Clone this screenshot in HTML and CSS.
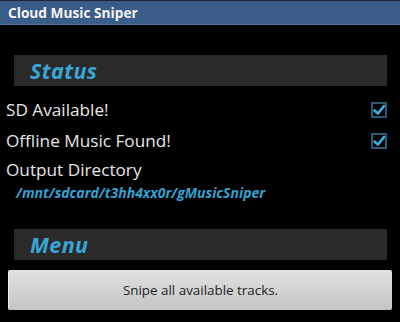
FILE: index.html
```html
<!DOCTYPE html>
<html>
<head>
<meta charset="utf-8">
<link rel="stylesheet" href="styles.css">
</head>
<body>
<div class="titlebar">Cloud Music Sniper</div>
<div class="section-header first">Status</div>
<div class="row">
  <span class="label">SD Available!</span>
  <span class="checkbox"><svg viewBox="0 0 16 16" width="16" height="16"><path d="M3.5 8.5 L7 11.5 L13 4" fill="none" stroke="#39b3e6" stroke-width="2.6" stroke-linecap="round" stroke-linejoin="round"/></svg></span>
</div>
<div class="row">
  <span class="label">Offline Music Found!</span>
  <span class="checkbox"><svg viewBox="0 0 16 16" width="16" height="16"><path d="M3.5 8.5 L7 11.5 L13 4" fill="none" stroke="#39b3e6" stroke-width="2.6" stroke-linecap="round" stroke-linejoin="round"/></svg></span>
</div>
<div class="dir">
  <div class="label">Output Directory</div>
  <div class="path">/mnt/sdcard/t3hh4xx0r/gMusicSniper</div>
</div>
<div class="section-header">Menu</div>
<div class="button">Snipe all available tracks.</div>
</body>
</html>
```
FILE: styles.css
```css
html, body {
  margin: 0;
  padding: 0;
  background: #000;
  width: 400px;
  height: 322px;
  overflow: hidden;
  font-family: "Open Sans", "Noto Sans", sans-serif;
}
.titlebar {
  height: 23px;
  border-top: 1px solid #1b2638;
  border-bottom: 1px solid #5474a0;
  background: linear-gradient(#395a86, #3c5e8b);
  color: #f4f4f4;
  font-weight: bold;
  font-size: 13.7px;
  line-height: 23px;
  padding-left: 8px;
}
.section-header {
  margin: 0 13px 0 14px;
  height: 31px;
  background: #2a2a2a;
  padding-left: 16px;
  color: #38a6d6;
  font-style: italic;
  font-weight: bold;
  font-size: 21.5px;
  line-height: 31px;
  letter-spacing: 0.4px;
}
.section-header.first {
  margin-top: 30px;
  margin-bottom: 8px;
}
.row {
  display: flex;
  justify-content: space-between;
  align-items: center;
  height: 31px;
  padding: 0 13px 0 6px;
}
.label {
  color: #e6e6e6;
  font-size: 17.2px;
}
.checkbox {
  width: 12px;
  height: 12px;
  border: 2px solid #2d5a70;
  display: flex;
  align-items: center;
  justify-content: center;
}
.checkbox svg {
  flex: none;
}
.dir {
  padding: 3px 0 0 6px;
  height: 44px;
  margin-bottom: 26px;
}
.dir .label {
  line-height: 22px;
}
.path {
  color: #34a1d2;
  font-style: italic;
  font-weight: bold;
  font-size: 14px;
  line-height: 20px;
  padding: 2px 0 0 10px;
}
.button {
  margin: 10px 8px 0 8px;
  height: 40px;
  border-radius: 2px;
  background: linear-gradient(#e2e2e2, #c4c4c4);
  border-left: 1px solid #f0f0f0;
  color: #1e1e1e;
  font-size: 13.4px;
  display: flex;
  align-items: center;
  justify-content: center;
}
```
